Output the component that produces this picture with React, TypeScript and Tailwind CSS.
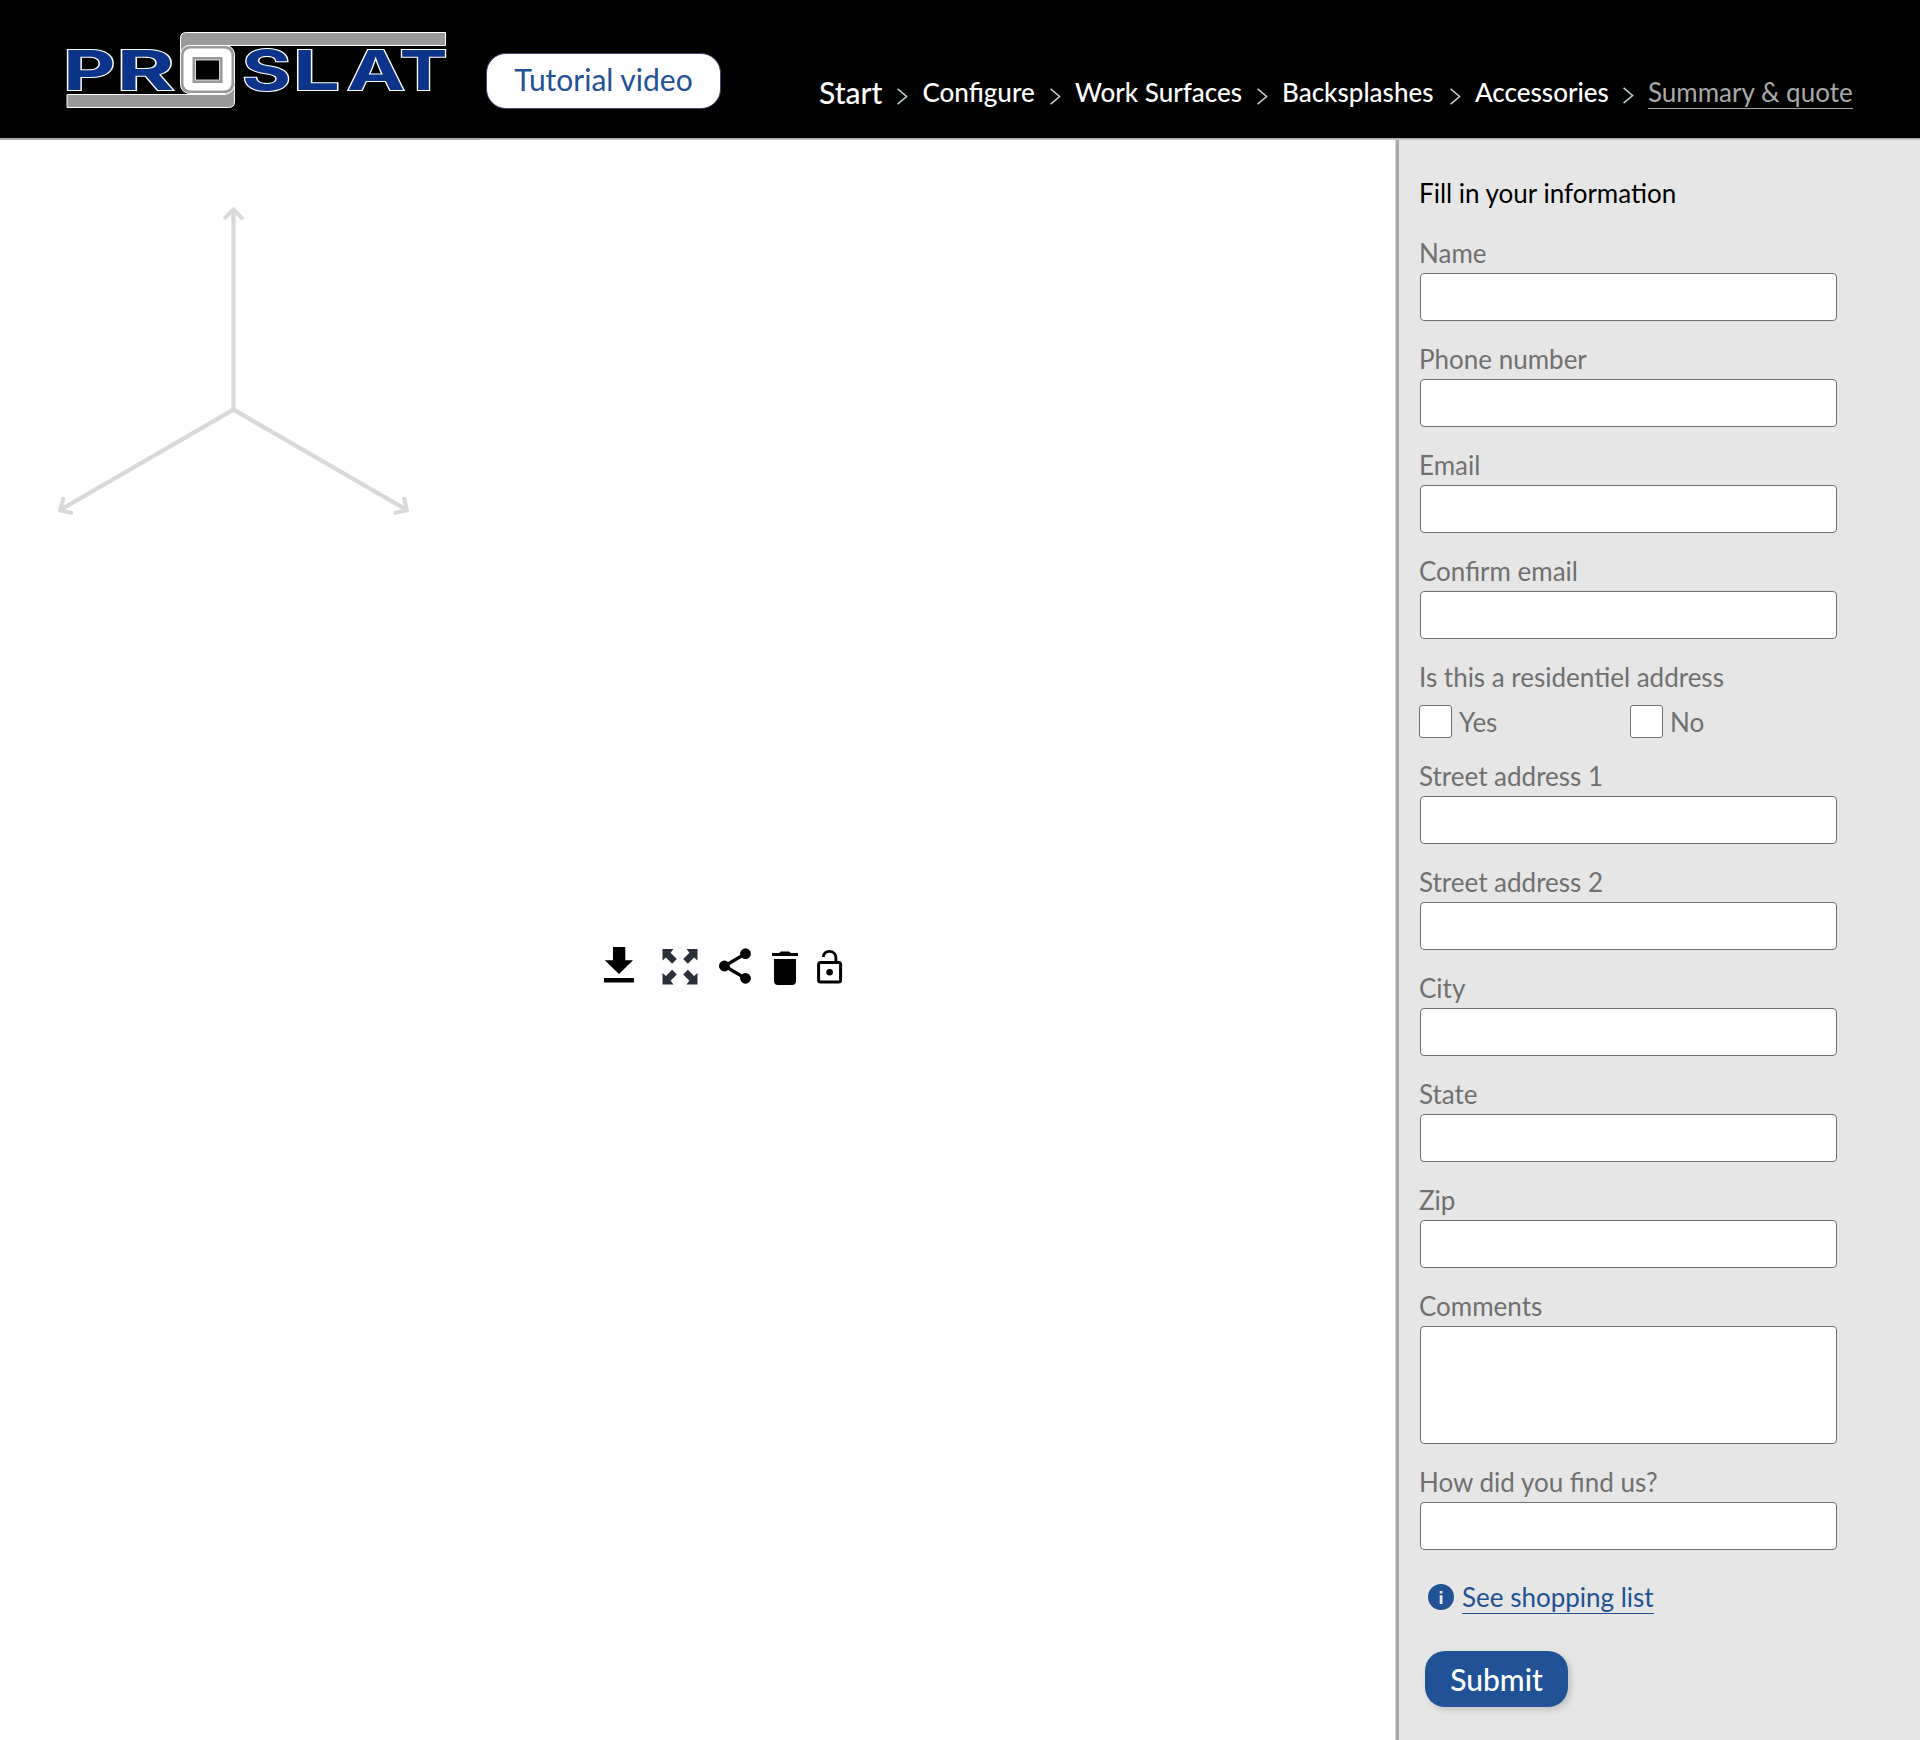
import React from "react";

const LOGO_LETTERS = [
  { ch: "P", x: 63, w: 52.5 },
  { ch: "R", x: 116.5, w: 58 },
  { ch: "S", x: 242, w: 49 },
  { ch: "L", x: 293, w: 47 },
  { ch: "A", x: 347, w: 58 },
  { ch: "T", x: 399.5, w: 48 },
];

function Logo() {
  return (
    <svg className="block h-[80px] w-[386px]" viewBox="64 30 386 80" role="img" aria-label="Proslat">
      <path d="M180.500 54V38q0-5.500 6-5.500H445.500V45.500H190q-7 1-9 8z" fill="#999" stroke="#fff" strokeWidth="1" />
      <path d="M234.500 86v16q0 5.500-6 5.500H67V94.500H225q7-1 9-8z" fill="#999" stroke="#fff" strokeWidth="1" />
      <rect x="180.500" y="45.500" width="54" height="48" rx="9" fill="#999" stroke="#fff" />
      <rect x="183.500" y="48.500" width="48" height="42" rx="7" fill="#fff" />
      <rect x="192.500" y="57" width="30" height="26" fill="#999" />
      <rect x="195.500" y="60" width="24" height="20" fill="#000" stroke="#fff" strokeWidth="0.800" />
      {LOGO_LETTERS.map((l) => (
        <text
          key={l.ch}
          x={l.x}
          y="90.300"
          textLength={l.w}
          lengthAdjust="spacingAndGlyphs"
          fontFamily="Inter, sans-serif"
          fontWeight="700"
          fontSize="55.500"
          fill="#0c348a"
          stroke="#fff"
          strokeWidth="2"
          paintOrder="stroke"
        >
          {l.ch}
        </text>
      ))}
    </svg>
  );
}

function Chevron({ className }: { className: string }) {
  return (
    <svg className={"block h-[17px] w-[11px] shrink-0 " + className} viewBox="0 0 11 17" fill="none" stroke="#c5d3d3" strokeWidth="1.500">
      <path d="M.6.900 9.600 8.500.6 16.100" />
    </svg>
  );
}

function Header() {
  return (
    <header>
      <div className="flex h-[138px] items-start bg-black">
        <div className="ml-16 mt-[30px]">
          <Logo />
        </div>
        <button className="ml-9 mt-[53px] flex h-14 w-[235px] items-center justify-center rounded-[20px] border border-[#45486a] bg-white pb-1 text-[30px] leading-9 text-[#205295]">
          Tutorial video
        </button>
        <nav className="ml-[98px] mt-[72px] flex h-10 items-start whitespace-nowrap text-[26px] font-medium leading-10 text-white">
          <a className="w-[78px] text-[30px]">Start</a>
          <Chevron className="mt-4" />
          <a className="ml-[14.5px] w-[127.5px]">Configure</a>
          <Chevron className="mt-4" />
          <a className="ml-[14px] w-[182px]">Work Surfaces</a>
          <Chevron className="mt-4" />
          <a className="ml-[14px] w-[168px]">Backsplashes</a>
          <Chevron className="mt-4" />
          <a className="ml-[14px] w-[148px]">Accessories</a>
          <Chevron className="mt-[15px]" />
          <a className="ml-[14px] h-[37px] border-b border-[#a9a9a9] font-normal text-[#a9a9a9]">Summary &amp; quote</a>
        </nav>
      </div>
      <div className="h-px bg-[#a9a9a9]" />
      <div className="flex h-px bg-[#c4c4c4]">
        <div className="w-[480px] bg-[#a9a9a9]" />
      </div>
    </header>
  );
}

function Axes() {
  return (
    <svg className="ml-[54px] mt-[64px] block h-[314px] w-[360px]" viewBox="54 204 360 314" fill="none" stroke="#d8d9db" strokeWidth="4.300">
      <path d="M233.500 209V409.700M233.500 409.700 60 510M233.500 409.700 407 510" />
      <path strokeWidth="4" strokeLinecap="round" strokeLinejoin="round" d="m225.300 217.700 8.200-8.400 8.400 8.700M63.200 498.700 60 510.200l11.300 2.700M404.200 498.700l2.800 11.500-11.700 2.700" />
    </svg>
  );
}

const CORNER_ARROW = "M.5 0H11.500L8.600 3.800l6.200 6.200-4.700 4.700L4 8.500.5 11.500z";

function Toolbar() {
  return (
    <div className="ml-[604px] mt-[428px] flex h-[42px] items-start">
      <svg className="block h-[37px] w-[30px]" viewBox="0 0 30 37">
        <path d="M9 1H21.300V14.300H29L15 28 .8 14.300H9zM0 32H30V36.500H0z" />
      </svg>
      <svg className="ml-7 mt-[3px] block size-9" viewBox="0 0 36 36" fill="#2b3038">
        <path d={CORNER_ARROW} />
        <path transform="matrix(-1 0 0 1 36 0)" d={CORNER_ARROW} />
        <path transform="matrix(1 0 0 -1 0 35.500)" d={CORNER_ARROW} />
        <path transform="matrix(-1 0 0 -1 36 35.500)" d={CORNER_ARROW} />
      </svg>
      <svg className="ml-[21px] mt-[2px] block h-9 w-8" viewBox="0 0 32 36">
        <path d="M26.500 5.600 5.500 18 26.500 30.400" fill="none" stroke="#000" strokeWidth="3.400" />
        <circle cx="26.500" cy="5.700" r="5.400" />
        <circle cx="5.400" cy="18" r="5.400" />
        <circle cx="26.500" cy="30.300" r="5.400" />
      </svg>
      <svg className="ml-5 mt-[5px] block h-[35px] w-[28px]" viewBox="0 0 28 35">
        <path d="M1 2H8l2-1.600h8L20 2h7V5H1zM3 8H25V30q0 4-4 4H7q-4 0-4-4z" />
      </svg>
      <svg className="ml-[18px] mt-[3px] block h-[35px] w-[26px]" viewBox="0 0 26 35">
        <rect x="1.600" y="13.500" width="22" height="19.600" rx="2" fill="none" stroke="#000" strokeWidth="3" />
        <path d="M6.200 8C6.800 4.500 9.300 2.400 12.300 2.400c4 0 6.600 2.800 6.600 6.600V13" fill="none" stroke="#000" strokeWidth="2.900" />
        <circle cx="12.600" cy="23.300" r="3.300" />
      </svg>
    </div>
  );
}

function Field({ label, className = "", tall = false }: { label: string; className?: string; tall?: boolean }) {
  return (
    <label className={"block " + className}>
      <span className="-ml-px block h-[37px] whitespace-nowrap text-[26px] leading-[34px] text-[#707070]">{label}</span>
      {tall ? (
        <textarea className="block h-[118px] w-[417px] resize-none rounded-[4px] border border-[#707070] bg-white" />
      ) : (
        <input className="block h-12 w-[417px] rounded-[4px] border border-[#707070] bg-white" />
      )}
    </label>
  );
}

function Check({ label, className }: { label: string; className: string }) {
  return (
    <label className={"flex items-start " + className}>
      <input type="checkbox" className="block h-[33px] w-[33px] appearance-none rounded-[3px] border border-[#707070] bg-white" />
      <span className="ml-[7px] leading-[34px]">{label}</span>
    </label>
  );
}

function QuoteForm() {
  return (
    <aside className="flex w-[525px] shrink-0 border-l border-[#d8d8d8]">
      <div className="w-[3px] bg-[#a9a9a9]" />
      <form className="flex-1 bg-[#e6e6e6] pl-[21px] pt-9">
        <h2 className="-ml-px h-[60px] text-[26px] leading-[34px] text-black">Fill in your information</h2>
        <Field label="Name" />
        <Field label="Phone number" className="mt-[21px]" />
        <Field label="Email" className="mt-[21px]" />
        <Field label="Confirm email" className="mt-[21px]" />
        <fieldset className="mt-[21px] text-[26px] leading-[34px] text-[#707070]">
          <p className="-ml-px h-[45px]">Is this a residentiel address</p>
          <div className="-ml-px flex h-[33px]">
            <Check label="Yes" className="w-[211px]" />
            <Check label="No" className="" />
          </div>
        </fieldset>
        <Field label="Street address 1" className="mt-[21px]" />
        <Field label="Street address 2" className="mt-[21px]" />
        <Field label="City" className="mt-[21px]" />
        <Field label="State" className="mt-[21px]" />
        <Field label="Zip" className="mt-[21px]" />
        <Field label="Comments" className="mt-[21px]" tall />
        <Field label="How did you find us?" className="mt-[21px]" />
        <div className="mt-[30px] flex items-start pl-2">
          <svg className="mt-1 block size-[26px]" viewBox="0 0 26 26">
            <circle cx="13" cy="13" r="13" fill="#205295" />
            <path d="M11.700 7h2.800v2.600h-2.800zM11.700 11.200h2.800V20h-2.800z" fill="#e6e6e6" />
          </svg>
          <a className="ml-2 h-[34px] border-b border-[#205295] text-[26px] leading-[34px] text-[#205295]">See shopping list</a>
        </div>
        <button type="button" className="ml-[5px] mt-[37px] block h-14 w-[143px] rounded-[20px] bg-[#205295] text-[30px] font-medium leading-9 text-white shadow-[3px_3px_6px_rgba(0,0,0,0.16)]">
          Submit
        </button>
      </form>
    </aside>
  );
}

export default function App() {
  return (
    <div className="flex h-[1740px] w-[1920px] flex-col overflow-hidden bg-white font-[Lato,sans-serif]">
      <Header />
      <div className="flex flex-1">
        <main className="flex-1">
          <Axes />
          <Toolbar />
        </main>
        <QuoteForm />
      </div>
    </div>
  );
}
